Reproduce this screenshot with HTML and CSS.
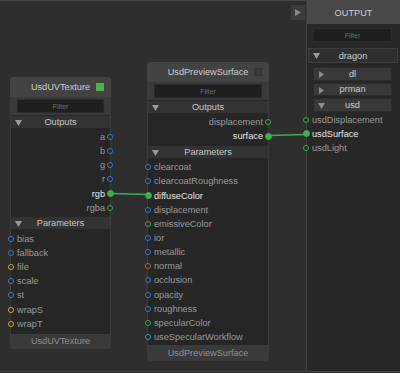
FILE: index.html
```html
<!DOCTYPE html>
<html>
<head>
<meta charset="utf-8">
<link rel="stylesheet" href="styles.css">
</head>
<body>
<div class="app">
  <div class="canvas">
    <svg class="wires" width="306" height="370" viewBox="0 0 306 370">
      <line x1="110.5" y1="193.5" x2="148" y2="194.5" stroke="#3fae4c" stroke-width="1.6"/>
      <line x1="268" y1="135.5" x2="306" y2="134.5" stroke="#3fae4c" stroke-width="1.6"/>
    </svg>

    <div class="node node-uv">
      <div class="node-head">UsdUVTexture<span class="swatch green"></span></div>
      <div class="filter-wrap"><div class="filter">Filter</div></div>
      <div class="section-head"><svg class="tri" width="7" height="6" viewBox="0 0 7 6"><polygon points="0,0 7,0 3.5,6" fill="#9a9a9a"/></svg>Outputs</div>
      <div class="section-body outs">
        <div class="row out">a<span class="port blue"></span></div>
        <div class="row out">b<span class="port blue"></span></div>
        <div class="row out">g<span class="port blue"></span></div>
        <div class="row out">r<span class="port blue"></span></div>
        <div class="row out hot">rgb<span class="port green filled"></span></div>
        <div class="row out">rgba<span class="port green"></span></div>
      </div>
      <div class="section-head"><svg class="tri" width="7" height="6" viewBox="0 0 7 6"><polygon points="0,0 7,0 3.5,6" fill="#9a9a9a"/></svg>Parameters</div>
      <div class="section-body ins">
        <div class="row in"><span class="port blue"></span>bias</div>
        <div class="row in"><span class="port blue"></span>fallback</div>
        <div class="row in"><span class="port yellow"></span>file</div>
        <div class="row in"><span class="port blue"></span>scale</div>
        <div class="row in"><span class="port blue"></span>st</div>
        <div class="row in"><span class="port yellow"></span>wrapS</div>
        <div class="row in"><span class="port yellow"></span>wrapT</div>
      </div>
      <div class="node-foot">UsdUVTexture</div>
    </div>

    <div class="node node-ps">
      <div class="node-head">UsdPreviewSurface<span class="swatch grey"></span></div>
      <div class="filter-wrap"><div class="filter">Filter</div></div>
      <div class="section-head"><svg class="tri" width="7" height="6" viewBox="0 0 7 6"><polygon points="0,0 7,0 3.5,6" fill="#9a9a9a"/></svg>Outputs</div>
      <div class="section-body outs">
        <div class="row out">displacement<span class="port green"></span></div>
        <div class="row out hot">surface<span class="port green filled"></span></div>
      </div>
      <div class="section-head"><svg class="tri" width="7" height="6" viewBox="0 0 7 6"><polygon points="0,0 7,0 3.5,6" fill="#9a9a9a"/></svg>Parameters</div>
      <div class="section-body ins">
        <div class="row in"><span class="port blue"></span>clearcoat</div>
        <div class="row in"><span class="port blue"></span>clearcoatRoughness</div>
        <div class="row in hot"><span class="port green filled"></span>diffuseColor</div>
        <div class="row in"><span class="port blue"></span>displacement</div>
        <div class="row in"><span class="port green"></span>emissiveColor</div>
        <div class="row in"><span class="port blue"></span>ior</div>
        <div class="row in"><span class="port blue"></span>metallic</div>
        <div class="row in"><span class="port orange"></span>normal</div>
        <div class="row in"><span class="port blue"></span>occlusion</div>
        <div class="row in"><span class="port blue"></span>opacity</div>
        <div class="row in"><span class="port blue"></span>roughness</div>
        <div class="row in"><span class="port green"></span>specularColor</div>
        <div class="row in"><span class="port teal"></span>useSpecularWorkflow</div>
      </div>
      <div class="node-foot">UsdPreviewSurface</div>
    </div>

    <div class="collapse-btn"><svg width="6" height="7" viewBox="0 0 6 7"><polygon points="0,0 6,3.5 0,7" fill="#8c8c8c"/></svg></div>
  </div>

  <div class="panel">
    <div class="panel-head">OUTPUT</div>
    <div class="panel-filter">Filter</div>
    <div class="group-row"><svg class="tri" width="7" height="6" viewBox="0 0 7 6"><polygon points="0,0 7,0 3.5,6" fill="#9a9a9a"/></svg>dragon</div>
    <div class="sub-rows">
      <div class="sub-row"><svg class="tri" width="5" height="7" viewBox="0 0 5 7"><polygon points="0,0 5,3.5 0,7" fill="#8c8c8c"/></svg>dl</div>
      <div class="sub-row"><svg class="tri" width="5" height="7" viewBox="0 0 5 7"><polygon points="0,0 5,3.5 0,7" fill="#8c8c8c"/></svg>prman</div>
      <div class="sub-row"><svg class="tri" width="7" height="6" viewBox="0 0 7 6"><polygon points="0,0 7,0 3.5,6" fill="#8c8c8c"/></svg>usd</div>
    </div>
    <div class="panel-ports">
      <div class="prow"><span class="port green"></span>usdDisplacement</div>
      <div class="prow hot"><span class="port green filled"></span>usdSurface</div>
      <div class="prow"><span class="port green"></span>usdLight</div>
    </div>
  </div>
</div>
</body>
</html>
```

FILE: styles.css
```css
* { box-sizing: border-box; }
html, body {
  margin: 0;
  padding: 0;
}
body {
  width: 400px;
  height: 373px;
  background: #2a2a2a;
  font-family: "Liberation Sans", Arial, sans-serif;
  font-size: 9.2px;
  color: #9a9a9a;
  overflow: hidden;
}
.app {
  display: flex;
  height: 372px;
  border-top: 1px solid #474747;
  border-bottom: 1px solid #474747;
}
.canvas {
  position: relative;
  width: 306px;
  background: #2e2e2e;
}
.wires {
  position: absolute;
  left: 0;
  top: -1px;
  z-index: 2;
}
.panel {
  flex: 1;
  background: #272727;
  border-left: 1px solid #3f3f3f;
  position: relative;
  display: flex;
  flex-direction: column;
}

/* Nodes */
.node {
  position: absolute;
  background: #3a3a3a;
  border-radius: 3px;
  padding: 0 1px;
  display: flex;
  flex-direction: column;
}
.node-uv { left: 10px; top: 76px; width: 101px; }
.node-ps { left: 147px; top: 61px; width: 122px; }

.node-head {
  height: 20px;
  display: flex;
  align-items: center;
  justify-content: center;
  position: relative;
  color: #cdcdcd;
  background: #434343;
  margin: 0 -1px;
  border-radius: 3px 3px 0 0;
}
.swatch {
  position: absolute;
  right: 7px;
  top: 6px;
  width: 8px;
  height: 8px;
}
.swatch.green { background: #4fae50; }
.swatch.grey { background: #3a3a3a; border: 1px solid #333; }

.filter-wrap {
  padding: 2px 6px;
  background: #3a3a3a;
}
.filter {
  height: 14px;
  background: #1f1f1f;
  border: 1px solid #2a2a2a;
  color: #6e6e6e;
  font-size: 7px;
  display: flex;
  align-items: center;
  justify-content: center;
}

.section-head {
  height: 14px;
  position: relative;
  display: flex;
  align-items: center;
  justify-content: center;
  background: #333333;
  border-top: 1px solid #272727;
  border-bottom: 1px solid #272727;
  color: #c6c6c6;
}
.section-head .tri {
  position: absolute;
  left: 4px;
  top: 4px;
}
.section-body {
  background: #262626;
}
.node-uv .outs { padding: 1px 0 1px; }
.node-uv .ins { padding: 2px 0 3px; }
.node-ps .outs { padding: 1px 0 2px; }
.node-ps .ins { padding: 1px 0 1px; }

.row {
  height: 14.15px;
  display: flex;
  align-items: center;
  position: relative;
  white-space: nowrap;
}
.row.out { justify-content: flex-end; padding-right: 5px; }
.row.in { padding-left: 6px; }
.hot { color: #e6e6e6; }

.port {
  position: absolute;
  width: 6px;
  height: 6px;
  border-radius: 50%;
  border: 1.5px solid;
  top: 50%;
  margin-top: -3px;
  background: #262626;
}
.row.out .port { right: -3px; }
.row.in .port { left: -3px; }
.port.blue { border-color: #3d78d0; }
.port.green { border-color: #3fae4c; }
.port.yellow { border-color: #c9b32c; }
.port.orange { border-color: #c8612c; }
.port.teal { border-color: #2aa4a4; }
.port.filled { background: #3fae4c; width: 7px; height: 7px; margin-top: -3.5px; }
.row.out .port.filled { right: -3.5px; }
.row.in .port.filled { left: -3.5px; }

.node-foot {
  height: 15px;
  display: flex;
  align-items: center;
  justify-content: center;
  background: #3a3a3a;
  color: #909090;
  border-radius: 0 0 3px 3px;
}
.node-ps .node-foot { height: 16px; }

.collapse-btn {
  position: absolute;
  left: 291px;
  top: 4px;
  width: 14px;
  height: 15px;
  background: #3c3c3c;
  display: flex;
  align-items: center;
  justify-content: center;
}

/* Panel */
.panel-head {
  height: 23px;
  background: #484848;
  color: #cfcfcf;
  display: flex;
  align-items: center;
  justify-content: center;
}
.panel-filter {
  margin: 4px 8px 0 6px;
  height: 14px;
  background: #1f1f1f;
  border: 1px solid #2c2c2c;
  color: #6e6e6e;
  font-size: 7px;
  display: flex;
  align-items: center;
  justify-content: center;
}
.group-row {
  margin: 6px 2px 0 1px;
  height: 15px;
  position: relative;
  display: flex;
  align-items: center;
  justify-content: center;
  background: #2f2f2f;
  border: 1px solid #3d3d3d;
  color: #cdcdcd;
}
.group-row .tri { position: absolute; left: 4px; top: 4px; }
.sub-rows {
  display: flex;
  flex-direction: column;
  gap: 2px;
  margin: 4px 8px 0 6px;
}
.sub-row {
  height: 13.5px;
  position: relative;
  display: flex;
  align-items: center;
  justify-content: center;
  background: #393939;
  border: 1px solid #2c2c2c;
  color: #cdcdcd;
}
.sub-row .tri { position: absolute; left: 5px; top: 3px; }
.sub-row:last-child .tri { left: 4px; top: 4px; }

.panel-ports {
  margin-top: 1px;
}
.prow {
  height: 14px;
  position: relative;
  display: flex;
  align-items: center;
  padding-left: 5px;
  white-space: nowrap;
}
.prow .port { left: -4px; }
.prow .port.filled { left: -4.5px; }
```
